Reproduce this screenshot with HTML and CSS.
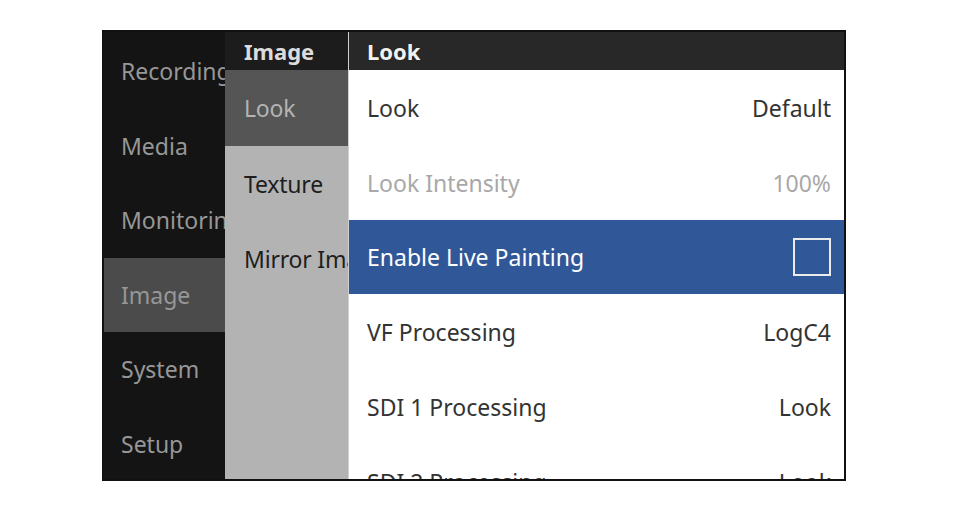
FILE: index.html
```html
<!DOCTYPE html>
<html>
<head>
<meta charset="utf-8">
<link rel="stylesheet" href="styles.css">
</head>
<body>
<div class="frame">
  <div class="col col-main">
    <div class="main-item">Recording</div>
    <div class="main-item">Media</div>
    <div class="main-item">Monitoring</div>
    <div class="main-item is-active">Image</div>
    <div class="main-item">System</div>
    <div class="main-item">Setup</div>
  </div>
  <div class="col col-sub">
    <div class="col-head sub-head">Image</div>
    <div class="sub-item is-active">Look</div>
    <div class="sub-item">Texture</div>
    <div class="sub-item">Mirror Image</div>
  </div>
  <div class="col col-detail">
    <div class="col-head detail-head">Look</div>
    <div class="row"><span class="label">Look</span><span class="value">Default</span></div>
    <div class="row is-disabled"><span class="label">Look Intensity</span><span class="value">100%</span></div>
    <div class="row is-selected"><span class="label">Enable Live Painting</span><span class="checkbox"></span></div>
    <div class="row"><span class="label">VF Processing</span><span class="value">LogC4</span></div>
    <div class="row"><span class="label">SDI 1 Processing</span><span class="value">Look</span></div>
    <div class="row"><span class="label">SDI 2 Processing</span><span class="value">Look</span></div>
  </div>
</div>
</body>
</html>
```
FILE: styles.css
```css
html, body {
  margin: 0;
  padding: 0;
  background: #ffffff;
}
body {
  padding: 30px 0 0 102px;
  font-family: "Noto Sans", "Open Sans", sans-serif;
  font-size: 23px;
}
.frame {
  width: 740px;
  height: 447px;
  border: 2px solid #111111;
  display: flex;
  overflow: hidden;
}
.col {
  display: flex;
  flex-direction: column;
  overflow: hidden;
  flex: none;
}
.col-main {
  width: 121px;
  background: #141414;
  padding-top: 2px;
}
.main-item {
  height: 74.5px;
  flex: none;
  display: flex;
  align-items: center;
  padding-left: 17px;
  color: #979797;
  white-space: nowrap;
  overflow: hidden;
}
.main-item.is-active {
  background: #4b4b4b;
}
.col-sub {
  width: 123px;
  background: #b3b3b3;
}
.col-head {
  height: 38px;
  flex: none;
  display: flex;
  align-items: center;
  font-weight: bold;
  font-size: 22px;
  white-space: nowrap;
}
.sub-head {
  background: #1c1c1c;
  color: #dcdcdc;
  padding-left: 19px;
}
.sub-item {
  height: 75px;
  flex: none;
  display: flex;
  align-items: center;
  padding-left: 19px;
  color: #1e1e1e;
  white-space: nowrap;
  overflow: hidden;
  letter-spacing: -0.2px;
}
.sub-item.is-active {
  background: #555555;
  color: #b4b4b4;
  height: 76px;
}
.col-detail {
  flex: 1;
  background: #ffffff;
  border-left: 1px solid #d0d0d0;
}
.detail-head {
  background: #282828;
  color: #f2f2f2;
  padding-left: 18px;
}
.row {
  height: 75px;
  flex: none;
  display: flex;
  align-items: center;
  justify-content: space-between;
  padding: 0 13px 0 18px;
  color: #333333;
  white-space: nowrap;
}
.row:first-of-type {
  height: 76px;
}
.row.is-disabled {
  color: #a8a8a8;
}
.row.is-selected {
  background: #305898;
  color: #ffffff;
  height: 74px;
}
.checkbox {
  width: 34px;
  height: 34px;
  border: 2px solid #ececec;
}
```
